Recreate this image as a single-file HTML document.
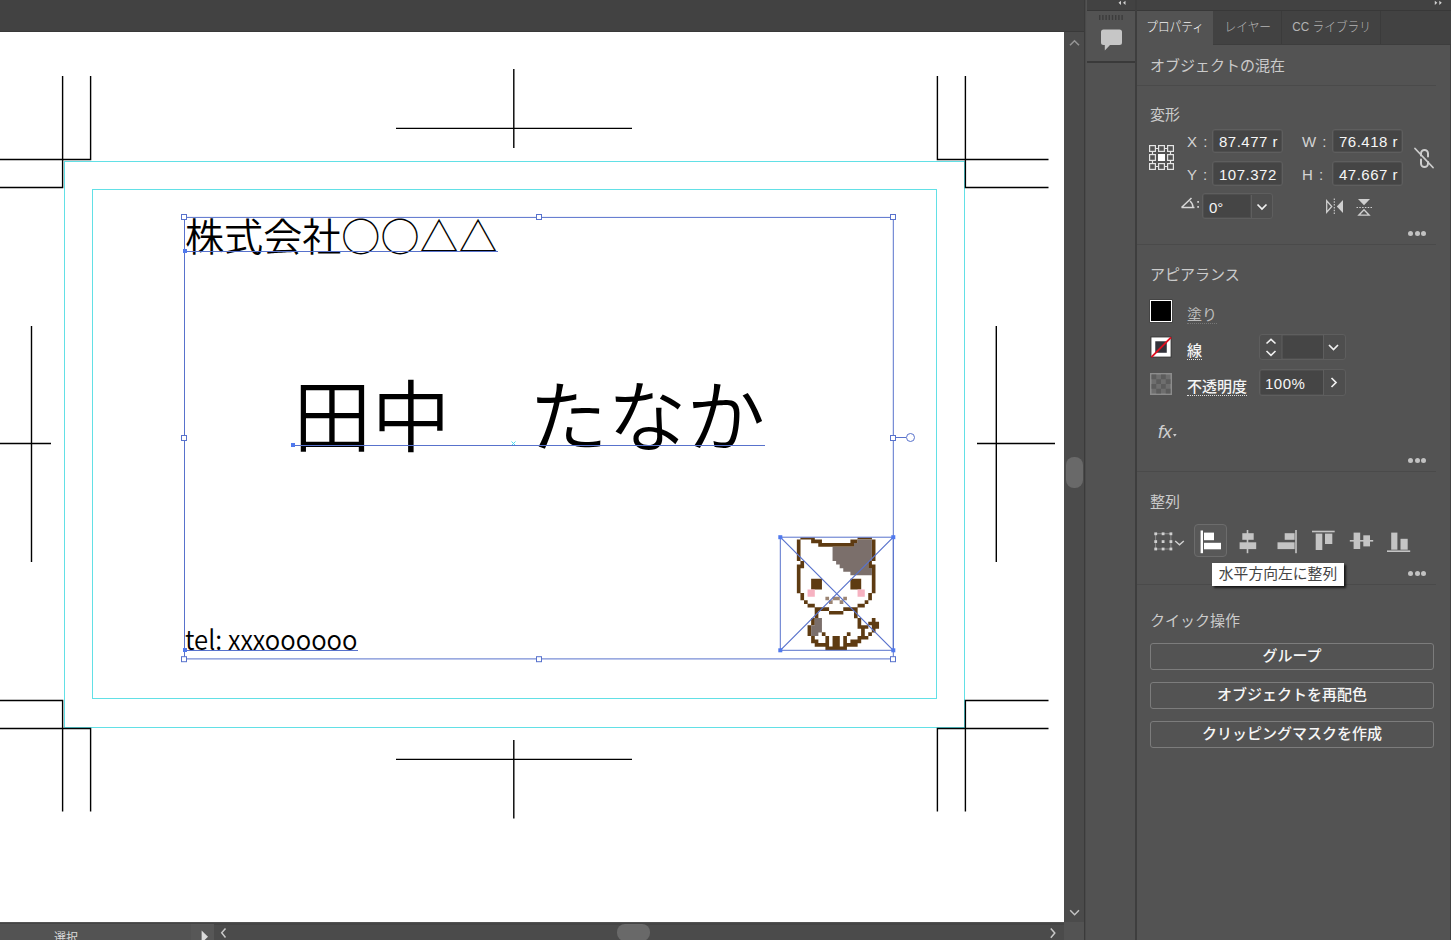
<!DOCTYPE html>
<html lang="ja">
<head>
<meta charset="utf-8">
<title>Illustrator</title>
<style>
*{box-sizing:border-box;margin:0;padding:0}
html,body{width:1451px;height:940px;overflow:hidden;background:#535353;font-family:"Liberation Sans","Noto Sans CJK JP",sans-serif;}
.abs{position:absolute}
#app{position:relative;width:1451px;height:940px;overflow:hidden;background:#535353}
#topbar{left:0;top:0;width:1085px;height:32px;background:#424242;border-bottom:1px solid #393939}
#canvas{left:0;top:32px;width:1064px;height:890px;background:#fff;overflow:hidden}
#vscroll{left:1064px;top:32px;width:21px;height:890px;background:#4b4b4b}
#vthumb{left:1066px;top:457px;width:17px;height:31px;border-radius:8px;background:#696969}
#botbar{left:0;top:922.6px;width:1085px;height:18px;background:#4b4b4b;border-top:2px solid #454545}
#status{left:0;top:924px;width:191px;height:16px;background:#535353;color:#d8d8d8;overflow:hidden}
#playbtn{left:191px;top:924px;width:23px;height:16px;background:#575757}
#hthumb{left:617px;top:924px;width:33px;height:17px;border-radius:8px;background:#696969}
#corner{left:1064px;top:922px;width:21px;height:18px;background:#535353}
/* dock */
#dockline1{left:1083.700px;top:0;width:2.800px;height:940px;background:linear-gradient(90deg,#3b3b3b 0,#3b3b3b 55%,#4a4a4a 55%)}
#dockhead{left:1087px;top:0;width:364px;height:10px;background:#424242}
#dockheadline{left:1087px;top:10px;width:364px;height:1px;background:#383838}
#iconcol{left:1086px;top:11px;width:49px;height:929px;background:#525252}
#iconpanel{left:1087px;top:11px;width:48px;height:50px;background:#535353}
#iconline{left:1087px;top:61px;width:48px;height:2px;background:#3a3a3a}
#dockline2{left:1135px;top:0;width:2px;height:940px;background:#3e3e3e}
#panel{left:1137px;top:11px;width:314px;height:929px;background:#535353}
#tabbar{left:1137px;top:11px;width:314px;height:33px;background:#424242}
.tab{top:11px;height:33px;font-size:13px;line-height:31px;color:#b4b4b4;text-align:center;white-space:nowrap;font-weight:300}
#tab1{left:1137px;width:76px;background:#535353;color:#f4f4f4}
#tab2{left:1214px;width:68px;border-right:1px solid #3b3b3b}
.tab span{display:inline-block;transform:scaleX(.9);transform-origin:50% 50%}
#tab3{left:1283px;width:98px;border-right:1px solid #3b3b3b}
#tabline{left:1213px;top:44px;width:238px;height:1px;background:#3d3d3d}
#redge{left:1449.700px;top:45px;width:1.300px;height:895px;background:#414141}
.h{color:#cbcbcb;font-size:15px;line-height:18px;white-space:nowrap}
.lbl{color:#d4d4d4;font-size:15px;line-height:18px;white-space:nowrap}
.sep{left:1137px;width:299px;height:1px;background:#4a4a4a}
.fw{border:1px solid #5e5e5e;border-radius:3px;background:#4e4e4e;overflow:hidden}
.fi{position:absolute;top:1px;bottom:1px;background:#454545;color:#f6f6f6;font-size:15px;letter-spacing:.5px;white-space:nowrap;overflow:hidden;padding-left:5px;line-height:22px}
.dots i{position:absolute;top:0;width:5px;height:5px;border-radius:3px;background:#c2c2c2}
.btn{left:1150px;width:284px;height:26.5px;border:1px solid #7c7c7c;border-radius:3px;color:#f6f6f6;font-size:15px;font-weight:500;line-height:24px;text-align:center;white-space:nowrap}
#tooltip{left:1212px;top:563px;width:132px;height:23px;background:#fff;color:#444;font-size:14.8px;line-height:22px;text-align:center;box-shadow:1.5px 1.5px 2px rgba(0,0,0,.7);white-space:nowrap}
.und{border-bottom:1px dotted #e0e0e0;padding-bottom:0}
svg{display:block}
</style>
</head>
<body>
<div id="app">
  <div id="topbar" class="abs"></div>
  <div id="canvas" class="abs">
    <svg class="abs" style="left:0;top:-32px" width="1064" height="940" viewBox="0 0 1064 940">
      <defs><clipPath id="catclip"><rect x="780" y="537.5" width="114" height="113"/></clipPath></defs>
      <!-- guides -->
      <g fill="none" stroke="#62e0e6" stroke-width="1">
        <rect x="64.5" y="161.5" width="900" height="566"/>
        <rect x="92.5" y="189.5" width="844" height="509"/>
      </g>
      <!-- crop marks -->
      <g fill="none" stroke="#000" stroke-width="1.4" id="marks">
        <path d="M62.6 76V187.5H0M90.6 76V159.5H0"/>
        <path d="M965.4 76V187.5H1048.5M937.4 76V159.5H1048.5"/>
        <path d="M62.6 811.5V700.5H0M90.6 811.5V728.5H0"/>
        <path d="M965.4 811.5V700.5H1048.5M937.4 811.5V728.5H1048.5"/>
        <path d="M513.8 69V148M396 128.4H632"/>
        <path d="M513.8 740V818.5M396 759.4H632"/>
        <path d="M31.5 326V562M0 443.5H51"/>
        <path d="M996.3 326V562M977 443.5H1055"/>
      </g>
      <!-- text -->
      <g fill="#000">
        <text id="t1" x="185" y="251" font-size="39.1" font-weight="350" font-family="'Noto Sans CJK JP',sans-serif">株式会社○○△△</text>
        <text id="t2" x="293" y="445.7" font-size="78.7" font-weight="350" font-family="'Noto Sans CJK JP',sans-serif">田中　たなか</text>
        <text id="t3" x="185" y="650" font-size="27" font-weight="350" textLength="172.5" lengthAdjust="spacingAndGlyphs" font-family="'Noto Sans CJK JP',sans-serif">tel: xxxoooooo</text>
      </g>
      <g id="cat" clip-path="url(#catclip)"><path fill="#5e3b12" d="M800.42 535.95h14.38v3.67h-14.38zM857.54 535.95h14.38v3.67h-14.38zM796.85 539.52h3.67v3.67h-3.67zM811.13 539.52h10.81v3.67h-10.81zM850.40 539.52h7.24v3.67h-7.24zM871.82 539.52h3.67v3.67h-3.67zM796.85 543.09h3.67v3.67h-3.67zM818.27 543.09h35.80v3.67h-35.80zM871.82 543.09h3.67v3.67h-3.67zM796.85 546.66h3.67v3.67h-3.67zM871.82 546.66h3.67v3.67h-3.67zM796.85 550.23h3.67v3.67h-3.67zM871.82 550.23h3.67v3.67h-3.67zM796.85 553.80h3.67v3.67h-3.67zM871.82 553.80h3.67v3.67h-3.67zM796.85 557.37h3.67v3.67h-3.67zM871.82 557.37h3.67v3.67h-3.67zM800.42 560.94h3.67v3.67h-3.67zM868.25 560.94h3.67v3.67h-3.67zM796.85 564.51h7.24v3.67h-7.24zM868.25 564.51h7.24v3.67h-7.24zM796.85 568.08h3.67v3.67h-3.67zM871.82 568.08h3.67v3.67h-3.67zM796.85 571.65h3.67v3.67h-3.67zM871.82 571.65h3.67v3.67h-3.67zM796.85 575.22h3.67v3.67h-3.67zM871.82 575.22h3.67v3.67h-3.67zM796.85 578.79h3.67v3.67h-3.67zM811.13 578.79h10.81v3.67h-10.81zM850.40 578.79h10.81v3.67h-10.81zM871.82 578.79h3.67v3.67h-3.67zM796.85 582.36h3.67v3.67h-3.67zM811.13 582.36h10.81v3.67h-10.81zM850.40 582.36h10.81v3.67h-10.81zM871.82 582.36h3.67v3.67h-3.67zM796.85 585.93h3.67v3.67h-3.67zM811.13 585.93h10.81v3.67h-10.81zM850.40 585.93h10.81v3.67h-10.81zM871.82 585.93h3.67v3.67h-3.67zM796.85 589.50h3.67v3.67h-3.67zM871.82 589.50h3.67v3.67h-3.67zM800.42 593.07h3.67v3.67h-3.67zM868.25 593.07h3.67v3.67h-3.67zM800.42 596.64h3.67v3.67h-3.67zM868.25 596.64h3.67v3.67h-3.67zM803.99 600.21h3.67v3.67h-3.67zM864.68 600.21h3.67v3.67h-3.67zM807.56 603.78h7.24v3.67h-7.24zM857.54 603.78h7.24v3.67h-7.24zM814.70 607.35h14.38v3.67h-14.38zM843.26 607.35h14.38v3.67h-14.38zM814.70 610.92h3.67v3.67h-3.67zM828.98 610.92h14.38v3.67h-14.38zM853.97 610.92h3.67v3.67h-3.67zM814.70 614.49h3.67v3.67h-3.67zM853.97 614.49h3.67v3.67h-3.67zM811.13 618.06h3.67v3.67h-3.67zM857.54 618.06h3.67v3.67h-3.67zM871.82 618.06h3.67v3.67h-3.67zM811.13 621.63h3.67v3.67h-3.67zM857.54 621.63h3.67v3.67h-3.67zM868.25 621.63h10.81v3.67h-10.81zM807.56 625.20h3.67v3.67h-3.67zM857.54 625.20h10.81v3.67h-10.81zM871.82 625.20h7.24v3.67h-7.24zM807.56 628.77h3.67v3.67h-3.67zM861.11 628.77h3.67v3.67h-3.67zM871.82 628.77h3.67v3.67h-3.67zM807.56 632.34h3.67v3.67h-3.67zM821.84 632.34h3.67v3.67h-3.67zM846.83 632.34h3.67v3.67h-3.67zM861.11 632.34h3.67v3.67h-3.67zM868.25 632.34h3.67v3.67h-3.67zM811.13 635.91h3.67v3.67h-3.67zM825.41 635.91h3.67v3.67h-3.67zM832.55 635.91h7.24v3.67h-7.24zM843.26 635.91h3.67v3.67h-3.67zM857.54 635.91h10.81v3.67h-10.81zM811.13 639.48h7.24v3.67h-7.24zM825.41 639.48h3.67v3.67h-3.67zM832.55 639.48h7.24v3.67h-7.24zM843.26 639.48h3.67v3.67h-3.67zM850.40 639.48h10.81v3.67h-10.81zM814.70 643.05h14.38v3.67h-14.38zM832.55 643.05h7.24v3.67h-7.24zM843.26 643.05h14.38v3.67h-14.38zM825.41 646.62h21.52v3.67h-21.52z"/><path fill="#7b6f6b" d="M857.54 539.52h14.38v3.67h-14.38zM853.97 543.09h17.95v3.67h-17.95zM832.55 546.66h39.37v3.67h-39.37zM832.55 550.23h39.37v3.67h-39.37zM832.55 553.80h39.37v3.67h-39.37zM832.55 557.37h39.37v3.67h-39.37zM836.12 560.94h32.23v3.67h-32.23zM839.69 564.51h28.66v3.67h-28.66zM843.26 568.08h28.66v3.67h-28.66zM850.40 571.65h21.52v3.67h-21.52zM814.70 618.06h7.24v3.67h-7.24zM814.70 621.63h7.24v3.67h-7.24zM811.13 625.20h10.81v3.67h-10.81zM811.13 628.77h10.81v3.67h-10.81zM811.13 632.34h7.24v3.67h-7.24z"/><path fill="#f6b2c1" d="M807.56 589.50h7.24v3.67h-7.24zM857.54 589.50h7.24v3.67h-7.24zM807.56 593.07h7.24v3.67h-7.24zM857.54 593.07h7.24v3.67h-7.24z"/><path fill="#9b8473" d="M825.41 596.64h3.67v3.67h-3.67zM832.55 596.64h7.24v3.67h-7.24zM843.26 596.64h3.67v3.67h-3.67zM828.98 600.21h3.67v3.67h-3.67zM839.69 600.21h3.67v3.67h-3.67z"/></g>
      <path d="M511.500 441.500L515.500 445.500M515.500 441.500L511.500 445.500" stroke="#4fd8ee" stroke-width="1" fill="none"/>
      <!-- selection -->
      <g fill="none" stroke="#5872cc" stroke-width="1">
        <rect x="184.5" y="217.400" width="708.800" height="441.500"/>
        <path d="M185 251.5H498M293 445.5H765M185 650.5H358"/>
        <rect x="780.300" y="537.200" width="113" height="113.100"/>
        <path d="M780.300 537.200L893.300 650.300M893.300 537.200L780.300 650.300" stroke-width="1.200"/>
        <path d="M896 437.5H906"/>
        <circle cx="910.5" cy="437.5" r="4"/>
      </g>
      <g fill="#fff" stroke="#5872cc" stroke-width="1">
        <rect x="181.5" y="214.5" width="5" height="5"/>
        <rect x="536.5" y="214.5" width="5" height="5"/>
        <rect x="890.5" y="214.5" width="5" height="5"/>
        <rect x="181.5" y="435.5" width="5" height="5"/>
        <rect x="890.5" y="435.5" width="5" height="5"/>
        <rect x="181.5" y="656.700" width="5" height="5"/>
        <rect x="536.5" y="656.700" width="5" height="5"/>
        <rect x="890.5" y="656.700" width="5" height="5"/>
      </g>
      <g fill="#5079ee">
        <rect x="183" y="249" width="4" height="4"/>
        <rect x="291" y="443" width="4" height="4"/>
        <rect x="183" y="648" width="4" height="4"/>
        <rect x="778.300" y="535.200" width="4" height="4"/>
        <rect x="891.300" y="535.200" width="4" height="4"/>
        <rect x="778.300" y="648.300" width="4" height="4"/>
        <rect x="891.300" y="648.300" width="4" height="4"/>
      </g>
    </svg>
  </div>
  <div id="vscroll" class="abs"></div>
  <div id="vthumb" class="abs"></div>
  <div id="botbar" class="abs"></div>
  <div id="status" class="abs"><span class="abs" style="left:54px;top:5.500px;font-size:12px;line-height:16px">選択</span></div>
  <div id="playbtn" class="abs"></div>
  <div id="hthumb" class="abs"></div>
  <div id="corner" class="abs"></div>
  <!-- scroll arrows -->
  <svg class="abs" style="left:1064px;top:32px" width="21" height="890" viewBox="0 0 21 890">
    <path d="M6 13.200L10.500 8.800L15 13.200" fill="none" stroke="#949494" stroke-width="1.600"/>
    <path d="M6.200 878.300L10.600 882.700L15 878.300" fill="none" stroke="#c4c4c4" stroke-width="1.500"/>
  </svg>
  <svg class="abs" style="left:191px;top:923px" width="894" height="17" viewBox="0 0 894 17">
    <path d="M10.600 7.500V20L17 13.700Z" fill="#dcdcdc"/>
    <path d="M34.5 5.5L30.7 9.8L34.5 14.5" fill="none" stroke="#c8c8c8" stroke-width="1.5"/>
    <path d="M859.8 5.5L863.8 10L859.8 14.7" fill="none" stroke="#c8c8c8" stroke-width="1.5"/>
  </svg>

  <div id="dockhead" class="abs"></div>
  <div id="dockheadline" class="abs"></div>
  <div id="iconcol" class="abs"></div>
  <div id="iconpanel" class="abs"></div>
  <div id="iconline" class="abs"></div>
  <div id="panel" class="abs"></div>
  <div id="tabbar" class="abs"></div>
  <div id="dockline1" class="abs"></div>
  <div id="dockline2" class="abs"></div>
  <!-- dock header arrows, gripper, comment icon -->
  <svg class="abs" style="left:1087px;top:0" width="364" height="64" viewBox="0 0 364 64">
    <path d="M34 0.700L31.500 2.800L34 4.900ZM38.500 0.700L36 2.800L38.500 4.900Z" fill="#d0d0d0"/>
    <path d="M347.800 0.700L350.300 2.800L347.800 4.900ZM352.300 0.700L354.800 2.800L352.300 4.900Z" fill="#d0d0d0"/>
    <g fill="#3c3c3c"><rect x="12" y="15" width="1.4" height="5"/><rect x="15.2" y="15" width="1.4" height="5"/><rect x="18.4" y="15" width="1.4" height="5"/><rect x="21.600" y="15" width="1.4" height="5"/><rect x="24.800" y="15" width="1.4" height="5"/><rect x="28" y="15" width="1.4" height="5"/><rect x="31.2" y="15" width="1.4" height="5"/><rect x="34.400" y="15" width="1.4" height="5"/></g>
    <path d="M16.5 29.500H32.500Q35 29.500 35 32V42.500Q35 45 32.500 45H23L17.800 50.500V45H16.500Q14 45 14 42.500V32Q14 29.500 16.500 29.500Z" fill="#c6c6c6"/>
  </svg>
  <div id="tabline" class="abs"></div><div id="redge" class="abs"></div>
  <div id="tab1" class="abs tab"><span>プロパティ</span></div>
  <div id="tab2" class="abs tab"><span>レイヤー</span></div>
  <div id="tab3" class="abs tab"><span>CC ライブラリ</span></div>

  <div class="abs h" style="left:1150px;top:57px">オブジェクトの混在</div>
  <div class="abs sep" style="top:85px"></div>

  <div class="abs h" style="left:1150px;top:106px">変形</div>
  <!-- reference point icon -->
  <svg class="abs" style="left:1149px;top:145px" width="26" height="26" viewBox="0 0 26 26">
    <g fill="none" stroke="#e4e4e4" stroke-width="1.2">
      <path d="M3.500 3.500H21.500V21.500H3.500Z"/>
    </g>
    <g fill="#535353" stroke="#e4e4e4" stroke-width="1.2">
      <rect x="0.6" y="0.6" width="5.8" height="5.8"/><rect x="9.600" y="0.6" width="5.8" height="5.8"/><rect x="18.600" y="0.6" width="5.8" height="5.8"/>
      <rect x="0.6" y="9.600" width="5.8" height="5.8"/><rect x="18.600" y="9.600" width="5.8" height="5.8"/>
      <rect x="0.6" y="18.600" width="5.8" height="5.8"/><rect x="9.600" y="18.600" width="5.8" height="5.8"/><rect x="18.600" y="18.600" width="5.8" height="5.8"/>
    </g>
    <rect x="9" y="9" width="7" height="7" fill="#fff"/>
  </svg>
  <div class="abs lbl" style="left:1187px;top:133px;word-spacing:2px">X :</div>
  <div class="abs fw" style="left:1212px;top:129px;width:71px;height:24px"><div class="fi" style="left:1px;right:1px">87.477 r</div></div>
  <div class="abs lbl" style="left:1302px;top:133px;word-spacing:2px">W :</div>
  <div class="abs fw" style="left:1332px;top:129px;width:71px;height:24px"><div class="fi" style="left:1px;right:1px">76.418 r</div></div>
  <div class="abs lbl" style="left:1187px;top:166px;word-spacing:2px">Y :</div>
  <div class="abs fw" style="left:1212px;top:161px;width:71px;height:25px"><div class="fi" style="left:1px;right:1px;line-height:24px">107.372</div></div>
  <div class="abs lbl" style="left:1302px;top:166px;word-spacing:2px">H :</div>
  <div class="abs fw" style="left:1332px;top:161px;width:71px;height:25px"><div class="fi" style="left:1px;right:1px;line-height:24px">47.667 r</div></div>
  <!-- link icon -->
  <svg class="abs" style="left:1412px;top:146px" width="24" height="24" viewBox="0 0 24 24">
    <g fill="none" stroke="#cdcdcd" stroke-width="2" stroke-linecap="round">
      <path d="M9 9.500V7.500A3.500 3.500 0 0 1 16 7.500V10.500"/>
      <path d="M9 13.500V17.500A3.500 3.500 0 0 0 16 17.500V16"/>
      <path d="M3 2.500L21 21.500" stroke-width="1.8"/>
    </g>
  </svg>
  <!-- angle -->
  <svg class="abs" style="left:1180px;top:196px" width="22" height="14" viewBox="0 0 22 14">
    <path d="M1.500 11.500H14.500M1.500 11.500L11.500 2M10 5Q13 7.500 13 11.500" fill="none" stroke="#d8d8d8" stroke-width="1.5"/>
    <rect x="17.300" y="5" width="1.6" height="1.8" fill="#d8d8d8"/><rect x="17.300" y="10" width="1.6" height="1.8" fill="#d8d8d8"/>
  </svg>
  <div class="abs fw" style="left:1202px;top:193px;width:71px;height:26px"><div class="fi" style="left:1px;width:46px;line-height:25px;letter-spacing:0">0°</div>
    <svg class="abs" style="left:48px;top:1px" width="22" height="24" viewBox="0 0 22 24"><rect x="0" y="0" width="1" height="24" fill="#5e5e5e"/><path d="M6.500 9.500L11 14L15.500 9.500" fill="none" stroke="#f0f0f0" stroke-width="1.7"/></svg>
  </div>
  <!-- flip icons -->
  <svg class="abs" style="left:1325px;top:198px" width="20" height="18" viewBox="0 0 20 18">
    <path d="M1.700 2.700V14.300L6.800 8.500Z" fill="none" stroke="#cfcfcf" stroke-width="1.3"/>
    <path d="M18 2V15L11.800 8.500Z" fill="#cfcfcf"/>
    <path d="M9.300 0.500V17" stroke="#cfcfcf" stroke-width="1.1" stroke-dasharray="1.5 1.300" fill="none"/>
  </svg>
  <svg class="abs" style="left:1356px;top:198px" width="18" height="20" viewBox="0 0 18 20">
    <path d="M2 1H14L8 7.200Z" fill="#cfcfcf"/>
    <path d="M2.800 17.200H13.200L8 11.800Z" fill="none" stroke="#cfcfcf" stroke-width="1.3"/>
    <path d="M0.500 9.500H16" stroke="#cfcfcf" stroke-width="1.1" stroke-dasharray="1.500 1.300" fill="none"/>
  </svg>
  <div class="abs dots" style="left:1408px;top:231px"><i style="left:0"></i><i style="left:6.5px"></i><i style="left:13px"></i></div>
  <div class="abs sep" style="top:244px"></div>

  <div class="abs h" style="left:1150px;top:266px">アピアランス</div>
  <div class="abs" style="left:1150px;top:300px;width:22px;height:22px;background:#000;border:1px solid #fff;box-shadow:0 0 0 .6px #3a3a3a"></div>
  <div class="abs lbl" style="left:1187px;top:306px;color:#bdbdbd"><span class="und" style="border-bottom-color:#777">塗り</span></div>
  <!-- stroke swatch -->
  <svg class="abs" style="left:1149.5px;top:335.5px" width="23" height="23" viewBox="0 0 24 24">
    <rect x="0.500" y="0.500" width="22" height="22" fill="#3a3a3a"/>
    <rect x="1.500" y="1.500" width="20" height="20" fill="#fff"/>
    <rect x="5.500" y="5.500" width="12" height="12" fill="#33333b"/>
    <path d="M1.500 22L22 1.500" stroke="#e01020" stroke-width="2"/>
  </svg>
  <div class="abs lbl" style="left:1187px;top:342px;color:#f4f4f4;font-weight:500"><span class="und">線</span></div>
  <div class="abs fw" style="left:1259px;top:334px;width:87px;height:26px">
    <div class="fi" style="left:22px;width:41px"></div>
    <svg class="abs" style="left:0;top:0" width="85" height="24" viewBox="0 0 85 24">
      <rect x="21.500" y="0" width="1" height="24" fill="#5e5e5e"/><rect x="63" y="0" width="1" height="24" fill="#5e5e5e"/>
      <path d="M6.500 8.500L11 4.300L15.500 8.500M6.500 16L11 20.300L15.500 16" fill="none" stroke="#f0f0f0" stroke-width="1.6"/>
      <path d="M69 10L73.500 14.500L78 10" fill="none" stroke="#f0f0f0" stroke-width="1.7"/>
    </svg>
  </div>
  <!-- opacity swatch -->
  <svg class="abs" style="left:1150px;top:373px" width="22" height="22" viewBox="0 0 22 22">
    <rect x="0" y="0" width="22" height="22" fill="#8c8c8c"/>
    <rect x="1.500" y="1.500" width="19" height="19" fill="#6e6e6e"/>
    <g fill="#5c5c5c"><rect x="1.500" y="1.500" width="4.750" height="4.750"/><rect x="11" y="1.500" width="4.750" height="4.750"/><rect x="6.250" y="6.250" width="4.750" height="4.750"/><rect x="15.750" y="6.250" width="4.750" height="4.750"/><rect x="1.500" y="11" width="4.750" height="4.750"/><rect x="11" y="11" width="4.750" height="4.750"/><rect x="6.250" y="15.750" width="4.750" height="4.750"/><rect x="15.750" y="15.750" width="4.750" height="4.750"/></g>
  </svg>
  <div class="abs lbl" style="left:1187px;top:378px;color:#f4f4f4;font-weight:500"><span class="und">不透明度</span></div>
  <div class="abs fw" style="left:1259px;top:369px;width:87px;height:27px">
    <div class="fi" style="left:1px;width:62px;padding-left:4px;line-height:25px">100%</div>
    <svg class="abs" style="left:63px;top:0" width="22" height="25" viewBox="0 0 22 25">
      <rect x="0" y="0" width="1" height="25" fill="#5e5e5e"/>
      <path d="M8.500 8L13 12.500L8.500 17" fill="none" stroke="#f0f0f0" stroke-width="1.700"/>
    </svg>
  </div>
  <div class="abs" style="left:1158px;top:421px;color:#cfcfcf;font-size:18.500px;line-height:22px;font-style:italic;font-family:'Liberation Sans',sans-serif;letter-spacing:-0.5px">fx</div>
  <svg class="abs" style="left:1173px;top:434px" width="5" height="4" viewBox="0 0 5 4"><path d="M0 0H3.600L1.800 2.800Z" fill="#cfcfcf"/></svg>
  <div class="abs dots" style="left:1408px;top:458px"><i style="left:0"></i><i style="left:6.500px"></i><i style="left:13px"></i></div>
  <div class="abs sep" style="top:471px"></div>

  <div class="abs h" style="left:1150px;top:493px">整列</div>
  <!-- align icons -->
  <div class="abs" style="left:1194px;top:524px;width:33px;height:33px;background:#585858;border:1.5px solid #6c6c6c;border-radius:4px"></div>
  <svg class="abs" style="left:1150px;top:524px" width="270" height="34" viewBox="0 0 270 34">
    <!-- align-to dropdown -->
    <rect x="5.700" y="9.800" width="15.200" height="15.200" fill="none" stroke="#9a9a9a" stroke-width="0.8"/>
    <g fill="#d0d0d0">
      <rect x="4.300" y="8.400" width="2.800" height="2.800"/><rect x="11.700" y="8.400" width="2.800" height="2.800"/><rect x="19.500" y="8.400" width="2.800" height="2.800"/>
      <rect x="4.300" y="16.200" width="2.800" height="2.800"/><rect x="11.700" y="16.200" width="2.800" height="2.800"/><rect x="19.500" y="16.200" width="2.800" height="2.800"/>
      <rect x="4.300" y="23.600" width="2.800" height="2.800"/><rect x="11.700" y="23.600" width="2.800" height="2.800"/><rect x="19.500" y="23.600" width="2.800" height="2.800"/>
    </g>
    <path d="M25.200 17L29.500 20.800L33.800 17" fill="none" stroke="#d0d0d0" stroke-width="1.400"/>
    <!-- left (active) -->
    <g fill="#fff"><rect x="50.600" y="6.500" width="2.400" height="22.700"/><rect x="54" y="8.600" width="10" height="7.600"/><rect x="54" y="18.800" width="17" height="6.500"/></g>
    <!-- hcenter -->
    <g fill="#c4c4c4"><rect x="96.700" y="6" width="1.600" height="23.200"/><rect x="92.300" y="9.200" width="11.400" height="6.600"/><rect x="89.600" y="18.300" width="16.600" height="6.800"/></g>
    <!-- right -->
    <g fill="#c4c4c4"><rect x="145.200" y="6" width="1.600" height="23.200"/><rect x="134.700" y="9.200" width="9.900" height="6.600"/><rect x="127.500" y="18.300" width="17.100" height="6.800"/></g>
    <!-- top -->
    <g fill="#c4c4c4"><rect x="162" y="6.700" width="22.700" height="1.600"/><rect x="165.700" y="9.600" width="6.600" height="16.400"/><rect x="175" y="9.600" width="7.300" height="10.400"/></g>
    <!-- vcenter -->
    <g fill="#c4c4c4"><rect x="199.800" y="16" width="23.400" height="1.600"/><rect x="203.600" y="8.600" width="6.600" height="16.400"/><rect x="213.300" y="11.300" width="6.700" height="11.100"/></g>
    <!-- bottom -->
    <g fill="#c4c4c4"><rect x="237" y="26.400" width="23.200" height="1.600"/><rect x="241.200" y="8.600" width="6.200" height="17.100"/><rect x="250.500" y="14.800" width="7.200" height="10.900"/></g>
  </svg>
  <div class="abs dots" style="left:1408px;top:571px"><i style="left:0"></i><i style="left:6.500px"></i><i style="left:13px"></i></div>
  <div class="abs sep" style="top:584px"></div>
  <div id="tooltip" class="abs">水平方向左に整列</div>

  <div class="abs h" style="left:1150px;top:612px">クイック操作</div>
  <div class="abs btn" style="top:643px">グループ</div>
  <div class="abs btn" style="top:682px">オブジェクトを再配色</div>
  <div class="abs btn" style="top:721px">クリッピングマスクを作成</div>
</div>
</body>
</html>
